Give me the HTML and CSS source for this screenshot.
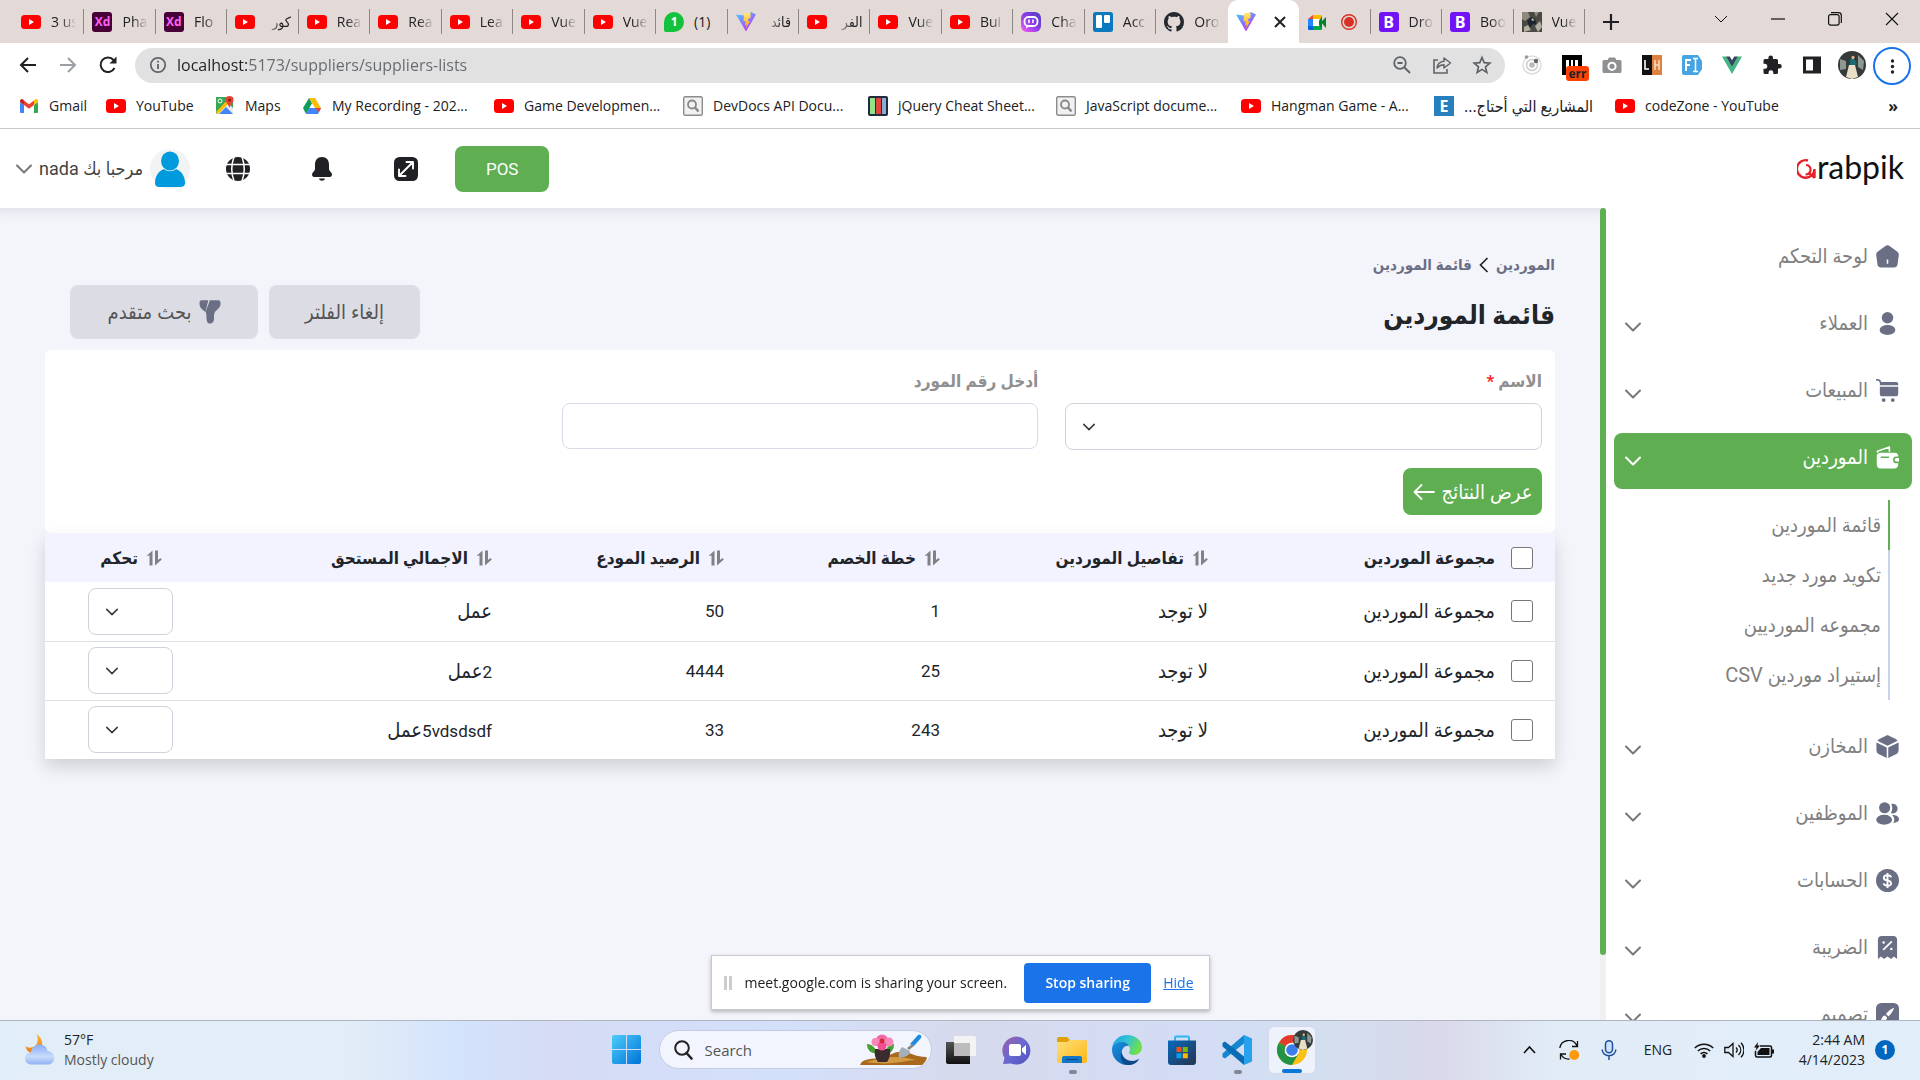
FILE: index.html
```html
<!DOCTYPE html>
<html lang="ar">
<head>
<meta charset="utf-8">
<meta name="viewport" content="width=device-width, initial-scale=1">
<title>قائمة الموردين</title>
<link rel="stylesheet" href="styles.css">
</head>
<body>

<svg class="sprite" aria-hidden="true">
  <defs>
    <linearGradient id="g-vite" x1="0" y1="0" x2=".6" y2="1"><stop offset="0" stop-color="#41d1ff"/><stop offset="1" stop-color="#bd34fe"/></linearGradient>
    <linearGradient id="g-bolt" x1="0" y1="0" x2="0" y2="1"><stop offset="0" stop-color="#ffea83"/><stop offset="1" stop-color="#ffa800"/></linearGradient>
    <linearGradient id="g-chat" x1="0" y1="1" x2="1" y2="0"><stop offset="0" stop-color="#ff5cf0"/><stop offset=".5" stop-color="#8a3de8"/><stop offset="1" stop-color="#4a3fc0"/></linearGradient>
    <linearGradient id="g-win" x1="0" y1="0" x2="1" y2="1"><stop offset="0" stop-color="#4ccdfb"/><stop offset="1" stop-color="#0073d8"/></linearGradient>
    <linearGradient id="g-cloud" x1="0" y1="0" x2="0" y2="1"><stop offset="0" stop-color="#86adf5"/><stop offset=".6" stop-color="#c9dcfb"/><stop offset="1" stop-color="#8fb2f3"/></linearGradient>
    <linearGradient id="g-moon" x1="0" y1="0" x2="0" y2="1"><stop offset="0" stop-color="#f9b233"/><stop offset="1" stop-color="#ef7d22"/></linearGradient>
    <linearGradient id="g-teams" x1="0" y1="0" x2="1" y2="1"><stop offset="0" stop-color="#9b62a8"/><stop offset=".5" stop-color="#6a68d0"/><stop offset="1" stop-color="#4f52c0"/></linearGradient>
    <linearGradient id="g-folder" x1="0" y1="0" x2="1" y2="1"><stop offset="0" stop-color="#ffe07a"/><stop offset="1" stop-color="#fcb714"/></linearGradient>
    <linearGradient id="g-edge" x1="0" y1="0" x2="1" y2=".4"><stop offset="0" stop-color="#1b9de2"/><stop offset=".5" stop-color="#2fc2d8"/><stop offset="1" stop-color="#6fe04a"/></linearGradient>
    <linearGradient id="g-edge2" x1="0" y1="0" x2="1" y2="1"><stop offset="0" stop-color="#1a8ee0"/><stop offset="1" stop-color="#0c59a4"/></linearGradient>
    <linearGradient id="g-store" x1="0" y1="0" x2="1" y2="1"><stop offset="0" stop-color="#0669bd"/><stop offset="1" stop-color="#27344f"/></linearGradient>
    <linearGradient id="g-dark" x1="0" y1="0" x2="0" y2="1"><stop offset="0" stop-color="#555"/><stop offset="1" stop-color="#111"/></linearGradient>
  </defs>
  <symbol id="youtube" viewBox="0 0 20 20"><rect y="3" width="20" height="14" rx="3.500" fill="#f00"/><path d="M8 7l5 3-5 3z" fill="#fff"/></symbol>
  <symbol id="vite" viewBox="0 0 20 20"><path d="M0 2.500l8 .9L15 0l5 2.500L10 19.500z" fill="url(#g-vite)"/><path d="M14.500.3L8 1.600 7.500 9.500l2.300-.4-.8 4 1.600-.3-.6 3.700L14 9l-2.200.3.8-2.800 2-.4z" fill="url(#g-bolt)"/></symbol>
  <symbol id="poe" viewBox="0 0 20 20"><rect width="20" height="20" rx="6" fill="url(#g-chat)"/><rect x="3.500" y="5" width="13" height="9" rx="4" fill="none" stroke="#fff" stroke-width="1.800"/><path d="M8 8v2.500M12 8v2.500" stroke="#fff" stroke-width="1.600" stroke-linecap="round"/><path d="M5 13v3.500L9 14z" fill="#fff"/></symbol>
  <symbol id="trello" viewBox="0 0 20 20"><rect width="20" height="20" rx="2.500" fill="#0a79bf"/><rect x="3" y="3" width="6" height="13" rx="1.200" fill="#fff"/><rect x="11" y="3" width="6" height="8" rx="1.200" fill="#fff"/></symbol>
  <symbol id="github" viewBox="0 0 16 16"><path fill="#24292f" d="M8 0C3.580 0 0 3.580 0 8c0 3.540 2.290 6.530 5.470 7.590.4.070.55-.17.55-.38 0-.19-.01-.82-.01-1.490-2.010.37-2.530-.49-2.690-.94-.09-.23-.48-.94-.82-1.130-.28-.15-.68-.52-.01-.53.63-.01 1.080.58 1.230.82.72 1.210 1.870.87 2.330.66.07-.52.28-.87.51-1.070-1.780-.2-3.640-.89-3.640-3.950 0-.87.31-1.590.82-2.150-.08-.2-.36-1.020.08-2.120 0 0 .67-.21 2.200.82.64-.18 1.320-.27 2-.27s1.360.09 2 .27c1.530-1.040 2.200-.82 2.200-.82.44 1.100.16 1.920.08 2.120.51.56.82 1.270.82 2.150 0 3.070-1.870 3.750-3.650 3.950.29.25.54.73.54 1.480 0 1.070-.01 1.930-.01 2.200 0 .21.15.46.55.38A8.010 8.010 0 0 0 16 8c0-4.420-3.580-8-8-8z"/></symbol>
  <symbol id="meet" viewBox="0 0 20 20"><path d="M6 3v4H1z" fill="#ea4335"/><path d="M6 3h8a1 1 0 0 1 1 1v3H6z" fill="#fbbc04"/><path d="M1 7h5v7H1z" fill="#2684fc"/><path d="M1 14h5v4H2a1 1 0 0 1-1-1z" fill="#0066da"/><path d="M6 14h9v3a1 1 0 0 1-1 1H6z" fill="#00ac47"/><path d="M15 4v13l-3-4V9zM14 10l5-5v11z" fill="#00832d"/><path d="M6 7h6v7H6z" fill="#fff"/></symbol>
  <symbol id="photo" viewBox="0 0 20 20"><path d="M0 0h20v20H0z" fill="#4a4a44"/><path d="M0 0h6l2 5-5 4-3-2zM12 0h5l-3 5z" fill="#8d8a7c"/><path d="M5 9l4-4 4 2 2 6-4-1-3 4z" fill="#1d2430"/><path d="M2 15l4-2 3 5-7 2zM13 14l5-5 2 6-4 5z" fill="#b3aea0"/><path d="M9 8l2-2 1 3z" fill="#d9d2c2"/></symbol>
  <symbol id="gmail" viewBox="0 0 20 20"><path d="M1 6v10a1 1 0 0 0 1 1h3V9z" fill="#4285f4"/><path d="M19 6v10a1 1 0 0 1-1 1h-3V9z" fill="#34a853"/><path d="M15 4.500V9l4-3V5a2 2 0 0 0-3.200-1.600z" fill="#fbbc04"/><path d="M5 9V4.500l5 3.800 5-3.800V9l-5 3.800z" fill="#ea4335"/><path d="M1 5v1l4 3V4.500l-.8-1A2 2 0 0 0 1 5z" fill="#c5221f"/></symbol>
  <symbol id="maps" viewBox="0 0 20 20"><path d="M1 1h17v17H1z" fill="#34a853"/><path d="M1 18L12 6l6 6v6z" fill="#e8eaed"/><path d="M4 18l7-7 7 7z" fill="#4285f4"/><path d="M1 16L13 3l2 3L3 18z" fill="#fbbc04"/><circle cx="5" cy="5" r="2" fill="none" stroke="#fff"/><path d="M14.500 0a4 4 0 0 1 4 4c0 3-3 4-4 8-1-4-4-5-4-8a4 4 0 0 1 4-4z" fill="#ea4335"/><circle cx="14.500" cy="4" r="1.500" fill="#8c1b13"/></symbol>
  <symbol id="drive" viewBox="0 0 20 20"><path d="M7 2h6l6 10h-6z" fill="#fbbc04"/><path d="M7 2l3 5.500L4 18l-3-6z" fill="#0f9d58"/><path d="M7 12h12l-3 6H4z" fill="#4285f4"/><path d="M10 8l2.500 4h-5z" fill="#fff"/><path d="M13 12h6l-2 4z" fill="#ea4335"/></symbol>
  <symbol id="docsearch" viewBox="0 0 20 20"><rect x=".7" y=".7" width="18.600" height="18.600" rx="1.500" fill="#f1f1f1" stroke="#8c8c8c" stroke-width="1.400"/><circle cx="9" cy="8.500" r="4" fill="none" stroke="#888" stroke-width="1.800"/><path d="M12 11.500l3.500 4" stroke="#888" stroke-width="2.500"/></symbol>
  <symbol id="jquery" viewBox="0 0 20 20"><rect width="20" height="20" rx="2" fill="#222b3d"/><path d="M2 2h5v16H2z" fill="#8fe388"/><path d="M8 2h5v16H8z" fill="#e0463e"/><path d="M14 2h4v16h-4z" fill="#86aed6"/></symbol>

  <symbol id="arrow-left" viewBox="0 0 20 20"><path d="M18 10H3M10 3l-7 7 7 7" fill="none" stroke="currentColor" stroke-width="2"/></symbol>
  <symbol id="arrow-right" viewBox="0 0 20 20"><path d="M2 10h15M10 3l7 7-7 7" fill="none" stroke="currentColor" stroke-width="2"/></symbol>
  <symbol id="reload" viewBox="0 0 20 20"><path d="M16.500 13A7.300 7.300 0 1 1 15.500 5l2 2" fill="none" stroke="currentColor" stroke-width="2"/><path d="M18.500 1.500v7h-7z" fill="currentColor"/></symbol>
  <symbol id="info" viewBox="0 0 18 18"><circle cx="9" cy="9" r="7.200" fill="none" stroke="currentColor" stroke-width="1.700"/><path d="M9 8v5M9 4.800v1.800" stroke="currentColor" stroke-width="1.800"/></symbol>
  <symbol id="zoomout" viewBox="0 0 20 20"><circle cx="8" cy="8" r="5.800" fill="none" stroke="currentColor" stroke-width="1.800"/><path d="M12.500 12.500l5.500 5.500M5.500 8h5" stroke="currentColor" stroke-width="1.900"/></symbol>
  <symbol id="share" viewBox="0 0 20 20"><path d="M6 5H2v13h13v-4" fill="none" stroke="currentColor" stroke-width="1.600"/><path d="M5 13c.5-4.500 3-6.500 7-6.800V3l6.500 5-6.500 5V9.800C9 9.800 7 11 5 13z" fill="none" stroke="currentColor" stroke-width="1.500" stroke-linejoin="round"/></symbol>
  <symbol id="star" viewBox="0 0 20 20"><path d="M10 2.500l2.200 5.200 5.600.5-4.300 3.700 1.300 5.500-4.800-3-4.800 3 1.300-5.500L2.200 8.200l5.600-.5z" fill="none" stroke="currentColor" stroke-width="1.700"/></symbol>
  <symbol id="orbit" viewBox="0 0 20 20"><circle cx="10" cy="10" r="9" fill="none" stroke="#ddd" stroke-width="1.500"/><circle cx="10" cy="10" r="5.500" fill="none" stroke="#ccc" stroke-width="1.500"/><circle cx="10" cy="10" r="2.800" fill="#bbb"/><circle cx="14" cy="6" r="2.200" fill="#666"/><circle cx="4.500" cy="2" r="1.800" fill="#999"/></symbol>
  <symbol id="mtile" viewBox="0 0 20 20"><path d="M0 0h20v20H0z"/><path d="M4 5h3v9H4zM9 5h2v9H9zM13 5h3v9h-3z" fill="#fff"/></symbol>
  <symbol id="camera" viewBox="0 0 20 20"><path d="M2 5h3.500l1.500-2.500h6L14.500 5H18a1.500 1.500 0 0 1 1.500 1.500v10A1.500 1.500 0 0 1 18 18H2a1.500 1.500 0 0 1-1.500-1.500v-10A1.500 1.500 0 0 1 2 5z" fill="#8e9092"/><circle cx="10" cy="11.300" r="3.600" fill="none" stroke="#fff" stroke-width="2"/></symbol>
  <symbol id="lh" viewBox="0 0 20 20"><path d="M0 0h10v20H0z" fill="#111"/><path d="M10 0h10v20H10z" fill="#e0803e"/><path d="M3 5v9h4" stroke="#fff" fill="none" stroke-width="1.600"/><path d="M13 5v10M17 5v10M13 10h4" stroke="#f7dcc5" stroke-width="1.500"/></symbol>
  <symbol id="font-ext" viewBox="0 0 20 20"><path d="M2 0h14l4 6v8l-4 6H2a2 2 0 0 1-2-2V2a2 2 0 0 1 2-2z" fill="#47a4e2"/><path d="M4 16V5h5M4 10h4" fill="none" stroke="#fff" stroke-width="2"/><path d="M11 3.500h5M11 16.500h5M13.500 4v12" stroke="#fff" stroke-width="1.500"/></symbol>
  <symbol id="vue" viewBox="0 0 20 20"><path d="M0 1.500h4l6 10.500 6-10.500h4L10 19z" fill="#41b883"/><path d="M4 1.500h3.800L10 5.300l2.200-3.800H16L10 12z" fill="#35495e"/></symbol>
  <symbol id="puzzle" viewBox="0 0 20 20"><path d="M17.500 9H16V5.500A1.500 1.500 0 0 0 14.500 4H11V2.800a2.300 2.300 0 0 0-4.600 0V4H3a1.500 1.500 0 0 0-1.500 1.500v3.300h1.300a2.500 2.500 0 0 1 0 5H1.500v3.700A1.500 1.500 0 0 0 3 19h3.500v-1.300a2.400 2.400 0 0 1 4.800 0V19h3.200a1.500 1.500 0 0 0 1.500-1.500V13.500h1.500a2.250 2.250 0 0 0 0-4.500z" fill="#202124"/></symbol>
  <symbol id="sidepanel" viewBox="0 0 20 20"><path d="M1 1.500h18v17H1zM4 4.500v11h7v-11z" fill="#202124" fill-rule="evenodd"/></symbol>
  <symbol id="portrait" viewBox="0 0 28 28"><circle cx="14" cy="14" r="14" fill="#343b3a"/><path d="M2 8l6 2v8l-6 1zM20 4l6 6-1 9-5-3z" fill="#8d9891"/><path d="M13 5h4l1 6-2 4h-4z" fill="#111"/><path d="M12 8l5 0 2 5-3 2-4-1z" fill="#1b6a78"/><path d="M11 14h6l3 12-6 2-6-2z" fill="#e9dfc6"/><circle cx="15" cy="6.500" r="1.800" fill="#d9b08c"/></symbol>
  <symbol id="dots" viewBox="0 0 20 20"><circle cx="10" cy="3.500" r="2" fill="#202124"/><circle cx="10" cy="10" r="2" fill="#202124"/><circle cx="10" cy="16.500" r="2" fill="#202124"/></symbol>

  <symbol id="chev" viewBox="0 0 16 10"><path d="M1 1.500l7 7 7-7" fill="none" stroke="currentColor" stroke-width="2" stroke-linecap="round" stroke-linejoin="round"/></symbol>
  <symbol id="globe" viewBox="0 0 24 24"><circle cx="12" cy="12" r="12" fill="#202124"/><path d="M0 7.500h24M0 16.500h24M8 0c-3 8-3 16 0 24M16 0c3 8 3 16 0 24" fill="none" stroke="#fff" stroke-width="1.500"/></symbol>
  <symbol id="bell" viewBox="0 0 20 24"><path d="M10 0c4.500 0 7 3 7 7.500V12c0 2 3 3.500 3 5.500 0 2-1.500 2.500-3 2.500H3c-1.500 0-3-.5-3-2.500S3 14 3 12V7.500C3 3 5.500 0 10 0zM7 21.500h6c-.5 3-5.500 3-6 0z" fill="#202124"/></symbol>
  <symbol id="expand" viewBox="0 0 24 24"><rect width="24" height="24" rx="5.500" fill="#202124"/><path d="M5 19L19 5M12.500 5H19v6.500M5 12.500V19h6.500" fill="none" stroke="#fff" stroke-width="1.900" stroke-linecap="round" stroke-linejoin="round"/></symbol>
  <symbol id="user-blue" viewBox="0 0 40 40"><circle cx="20" cy="20" r="20" fill="#f2f3f3"/><ellipse cx="20" cy="12" rx="9" ry="9.500" fill="#009bdc"/><path d="M14 20c3 3 9 3 12 0 6 2 9 8 9 14 0 3-2 4-5 4H10c-3 0-5-1-5-4 0-6 3-12 9-14z" fill="#009bdc"/></symbol>

  <symbol id="home" viewBox="0 0 24 24"><path fill-rule="evenodd" d="M9.500 1.300a4 4 0 0 1 5 0l7.500 5.500c1.500 1.200 2 2.600 1.700 4.300l-1.200 9c-.3 2.200-1.700 3.400-3.800 3.400H5.300c-2.100 0-3.500-1.200-3.800-3.400l-1.200-9C0 9.400.5 8 2 6.800zM11.200 15v4.500h1.600V15z" fill="currentColor"/></symbol>
  <symbol id="person" viewBox="0 0 24 24"><circle cx="12" cy="6" r="6" fill="currentColor"/><ellipse cx="12" cy="18.800" rx="8.200" ry="5.200" fill="currentColor"/></symbol>
  <symbol id="cart" viewBox="0 0 24 24"><path d="M0 .9c3-.3 4.300 0 4.600 2.400" fill="none" stroke="currentColor" stroke-width="1.600" stroke-linecap="round"/><path d="M4 3h17a2.200 2.200 0 0 1 2.200 2.300V6.500H4zM4 8h19.200v7a3 3 0 0 1-3 3H6.500C4.500 18 4 16.500 4 15z" fill="currentColor"/><circle cx="8" cy="22" r="2" fill="currentColor"/><circle cx="17.500" cy="22" r="2" fill="currentColor"/></symbol>
  <symbol id="wallet" viewBox="0 0 24 24"><path d="M1.500 7V5.500L14 1v5" fill="none" stroke="currentColor" stroke-width="1.600" stroke-linejoin="round"/><path fill-rule="evenodd" d="M4.500 7H20a3.500 3.500 0 0 1 3.300 4h-2a3.300 3.300 0 0 0 0 7h2c0 3.500-1.500 5.500-4.300 5.500H5C2.500 23.500.8 22 .8 19.500v-9C.8 8.500 2.300 7 4.500 7zM5 11v1.600h8.500V11z" fill="currentColor"/><path d="M21.300 12.600H24v3.600h-2.700a1.800 1.800 0 0 1 0-3.600z" fill="currentColor"/></symbol>
  <symbol id="box" viewBox="0 0 24 24"><path d="M12 0l8.500 4.200a5 5 0 0 1 2 1.800L12 11.300 1.500 6a5 5 0 0 1 2-1.800zM.5 7.800l10.700 5.300V24l-8-4A4.500 4.500 0 0 1 .4 16V8.500zM23.500 7.800l-10.700 5.300V24l8-4a4.500 4.500 0 0 0 2.800-4V8.500z" fill="currentColor"/></symbol>
  <symbol id="people" viewBox="0 0 24 24"><circle cx="9" cy="6" r="5.800" fill="currentColor"/><ellipse cx="8.500" cy="18.500" rx="8.300" ry="5.300" fill="currentColor"/><path d="M16 2.200a5 5 0 1 1-.5 9.300c1.800-3 1.900-6.300.5-9.300zM17 13.600c4 0 7 1.600 7 4.200s-2.300 4-6 4c1.700-2.500 1.400-5.500-1-8.200z" fill="currentColor"/></symbol>
  <symbol id="dollar" viewBox="0 0 24 24"><circle cx="12" cy="12" r="12" fill="currentColor"/><path d="M16 8.500c-.8-1.300-2.200-1.900-4-1.900-5 0-4.800 4.500-1 5.200 6 .8 6.400 5.600 1 5.600-2 0-3.500-.7-4.300-2.200M12 4.300v15.400" fill="none" stroke="#fff" stroke-width="2"/></symbol>
  <symbol id="receipt" viewBox="0 0 24 24"><path d="M2 4a4 4 0 0 1 4-4h12a4 4 0 0 1 4 4v20l-3.300-2.500-3 2.500L12 21.500 8.300 24l-3-2.500L2 24z" fill="currentColor"/><path d="M7.500 14.500l9-9" stroke="#fff" stroke-width="1.800"/><circle cx="8" cy="6.800" r="1.300" fill="#fff"/><circle cx="16" cy="13.500" r="1.300" fill="#fff"/></symbol>
  <symbol id="design" viewBox="0 0 24 24"><rect width="24" height="24" rx="5.500" fill="currentColor"/><path d="M19 5c-3 1-7 4-8.500 6.500l2.500 2.500C15.500 12 18 8 19 5zM9.500 13c-3 0-3 3-4.500 5 3 1 6.500 0 6.500-3z" fill="#fff"/></symbol>
  <symbol id="funnel" viewBox="0 0 22 24"><path d="M6.500 12C2.500 9.500.5 7 .5 4V2.500A2.200 2.200 0 0 1 2.700.3h6.600zM10.800.3h8.500a2.200 2.200 0 0 1 2.200 2.200V4c0 3.500-3.500 5.500-5.500 8-1 1.500-1 3-1 5 0 3.500 0 4.500-2 6-1.500 1-4 1-5-1.500C7 18.500 8 15 6.800 12.500 6.500 11.500 9 6 10.800.3z" fill="#6b6f85"/></symbol>
  <symbol id="sort" viewBox="0 0 16 16"><path d="M.5 6l6-5.500v15h-3v-10zM9 .5h3v9.500l2.500-2 1.300 1.500L9 15.500z" fill="#808085"/></symbol>
  <symbol id="go" viewBox="0 0 22 16"><path d="M21 8H1.500M8.500 1l-7 7 7 7" fill="none" stroke="currentColor" stroke-width="1.800" stroke-linecap="round" stroke-linejoin="round"/></symbol>
  <symbol id="crumb" viewBox="0 0 10 16"><path d="M8.500 1L1.500 8l7 7" fill="none" stroke="#212529" stroke-width="1.700"/></symbol>

  <symbol id="weather" viewBox="0 0 32 32"><path d="M12.500 0c2 4 1.500 9-1 11.500S4 14.500 1.500 12c.5 3 2 6 6.500 7h8c4-6 3-15-3.500-19z" fill="url(#g-moon)"/><path d="M8 30.500c-9 0-9-11.500-1-12C8 8.500 22 7.500 23.500 17c9 .5 9 13.500 0 13.500z" fill="url(#g-cloud)"/></symbol>
  <symbol id="windows" viewBox="0 0 30 30"><path d="M0 2a2 2 0 0 1 2-2h12.500v14.500H0zM15.500 0H28a2 2 0 0 1 2 2v12.500H15.500zM0 15.500h14.500V30H2a2 2 0 0 1-2-2zM15.500 15.500H30V28a2 2 0 0 1-2 2H15.500z" fill="url(#g-win)"/></symbol>
  <symbol id="search" viewBox="0 0 20 20"><circle cx="9" cy="8" r="6.800" fill="none" stroke="#222" stroke-width="2"/><path d="M13.500 13l5 5.500" stroke="#222" stroke-width="2.600" stroke-linecap="round"/></symbol>
  <symbol id="garden" viewBox="0 0 68 32"><path d="M0 31c2-7 14-6 20-7 10-1 14-8 24-6 8 1 12 5 22 5 2 0 0 5-4 8z" fill="#a8691e"/><path d="M6 28c14-4 30-8 50-2-10 0-22 6-50 2z" fill="#d29a43"/><path d="M7 10c5 0 9 4 10 9-6 1-10-3-10-9zM34 10c-5 0-8 4-9 9 6 1 9-3 9-9z" fill="#45a02f"/><path d="M15 15h15c1 5-1 10-3 13h-9c-3-4-4-8-3-13z" fill="#3a2c2e"/><circle cx="22" cy="7" r="6.500" fill="#f469a5"/><circle cx="15.500" cy="8" r="4" fill="#f887b8"/><circle cx="29" cy="8" r="4.500" fill="#f887b8"/><circle cx="22" cy="12" r="4.500" fill="#f05090"/><circle cx="22" cy="7" r="2.400" fill="#d32b3e"/><path d="M58 1c3-1 4 1 3 3l-7 8-4-2z" fill="#1e8be0"/><path d="M52 10l2 2-5 4-2-2z" fill="#888"/><path d="M42 13l8 4c0 4-4 6-11 7-1-4 0-8 3-11z" fill="#a5afb9"/></symbol>
  <symbol id="taskview" viewBox="0 0 30 30"><path d="M0 7h24v22H2a2 2 0 0 1-2-2z" fill="url(#g-dark)"/><path d="M8 1h20a2 2 0 0 1 2 2v18H8z" fill="#f3f3f3"/><path d="M8 8h16v13H8z" fill="#bcbcbc"/></symbol>
  <symbol id="teams" viewBox="0 0 30 30"><path d="M1 29l1.500-6A14 14 0 1 1 9 28.500z" fill="url(#g-teams)"/><rect x="7" y="9" width="12" height="12" rx="2" fill="#fff"/><path d="M20 13.500l4-3.500v10l-4-3.500z" fill="#fff"/></symbol>
  <symbol id="folder" viewBox="0 0 30 30"><path d="M0 4a2 2 0 0 1 2-2h8l3 3h15a2 2 0 0 1 2 2v4H0z" fill="#e0a008"/><path d="M0 7h10l3-2h15a2 2 0 0 1 2 2v19a2 2 0 0 1-2 2H2a2 2 0 0 1-2-2z" fill="url(#g-folder)"/><path d="M5 28v-5a2 2 0 0 1 2-2h16a2 2 0 0 1 2 2v5z" fill="#1378c8"/><path d="M9 24.500h12" stroke="#0a4c8c" stroke-width="1.300"/></symbol>
  <symbol id="edge" viewBox="0 0 30 30"><path d="M15 0c9 0 15 6 15 12 0 5-4 8-8 8-3 0-5-1-5-2.500 0-1 1-1.500 1-3.500 0-3-3-6-8-6S1 11 0 15C0 6 7 0 15 0z" fill="url(#g-edge)"/><path d="M0 15c0-5 5-8 10-8 4 0 6 2 7 4-5-1-8 4-7 8 1 5 5 8 9 8 3 0 6-1 8-3-2 4-7 6-12 6C7 30 0 23 0 15z" fill="url(#g-edge2)"/><path d="M9.500 17c1 6 6 9 11 9 2.500 0 5-1 6.500-2.500C24 31 13 32 10 26c-1.500-3-1.500-6-.5-9z" fill="#0c4a8a"/></symbol>
  <symbol id="store" viewBox="0 0 30 30"><path d="M8 6V3a1.500 1.500 0 0 1 1.500-1.500h11A1.500 1.500 0 0 1 22 3v3" fill="none" stroke="#2fb6ef" stroke-width="2"/><path d="M1 5.500h28V27a3 3 0 0 1-3 3H4a3 3 0 0 1-3-3z" fill="url(#g-store)"/><path d="M9.500 12h5v5h-5z" fill="#f25022"/><path d="M15.800 12h5v5h-5z" fill="#7fba00"/><path d="M9.500 18.300h5v5h-5z" fill="#00a4ef"/><path d="M15.800 18.300h5v5h-5z" fill="#ffb900"/></symbol>
  <symbol id="vscode" viewBox="0 0 30 30"><path d="M22 0v8.500L3 23.500.5 22v-3.500z" fill="#1387cf"/><path d="M22 30v-8.500L3 6.500.5 8v3.500z" fill="#0a6cb4"/><path d="M22 0l8 3.500v23L22 30z" fill="#27a0ee"/></symbol>
  <symbol id="chrome" viewBox="0 0 30 30"><circle cx="15" cy="15" r="15" fill="#fbc116"/><path d="M15 15L2 7.500A15 15 0 0 1 28 7.500H15z" fill="#e33b2e"/><path d="M2 7.500A15 15 0 0 0 15 30l6.500-11.300L15 15 8.500 18.700z" fill="#229342"/><path d="M2 7.500L8.500 18.700 15 15z" fill="#229342"/><circle cx="15" cy="15" r="7.300" fill="#fff"/><circle cx="15" cy="15" r="5.800" fill="#3b7ded"/></symbol>
  <symbol id="sync" viewBox="0 0 20 20"><path d="M.8 8A9 9 0 0 1 18 6M18.500 1v5.500H13M1.500 19.500V14h5.500M2 14.500c2 3.500 5 4.800 8.500 4.500" fill="none" stroke="#111" stroke-width="1.300"/><circle cx="15.200" cy="15" r="5" fill="#ff9a0c"/></symbol>
  <symbol id="mic" viewBox="0 0 16 20"><rect x="4.500" y=".8" width="7" height="12" rx="3.500" fill="#cfe3fb" stroke="#1c4fa0" stroke-width="1.500"/><path d="M1.200 9.500c0 8.300 13.600 8.300 13.600 0M8 16v4" fill="none" stroke="#1c4fa0" stroke-width="1.500"/></symbol>
  <symbol id="wifi" viewBox="0 0 20 16"><path d="M.8 6a13 13 0 0 1 18.400 0M3.800 9a8.800 8.800 0 0 1 12.400 0M6.600 11.900a4.800 4.800 0 0 1 6.800 0" fill="none" stroke="#111" stroke-width="1.500"/><circle cx="10" cy="14" r="1.900" fill="#111"/></symbol>
  <symbol id="volume" viewBox="0 0 20 16"><path d="M.8 5.500h3.700L9 1.500v13l-4.500-4H.8zM12 5.500c1.500 1.500 1.500 3.500 0 5M14.500 3c3 3 3 7 0 10M17 .8c4 4.200 4 10.200 0 14.400" fill="none" stroke="#111" stroke-width="1.300"/></symbol>
  <symbol id="battery" viewBox="0 0 20 16"><path d="M6 4h10a1.500 1.500 0 0 1 1.500 1.500v8A1.500 1.500 0 0 1 16 15H3a1.500 1.500 0 0 1-1.500-1.500V9" fill="none" stroke="#111" stroke-width="1.500"/><path d="M7 6h8.500v7H3.500v-3zM18 7.500h2v4h-2zM4 0L0 5.500h2.500L1.500 9 6 3.500H3.500z" fill="#111"/></symbol>
</svg>

<div class="browser">
  <div class="tabstrip">
    <div class="tabs">
      <button class="tab"><svg><use href="#youtube"/></svg><span>3 us</span></button>
      <button class="tab"><i class="letter xd">Xd</i><span>Pha</span></button>
      <button class="tab"><i class="letter xd">Xd</i><span>Flo</span></button>
      <button class="tab"><svg><use href="#youtube"/></svg><span dir="rtl">كور</span></button>
      <button class="tab"><svg><use href="#youtube"/></svg><span>Rea</span></button>
      <button class="tab"><svg><use href="#youtube"/></svg><span>Rea</span></button>
      <button class="tab"><svg><use href="#youtube"/></svg><span>Lea</span></button>
      <button class="tab"><svg><use href="#youtube"/></svg><span>Vue</span></button>
      <button class="tab"><svg><use href="#youtube"/></svg><span>Vue</span></button>
      <button class="tab"><i class="letter wa">1</i><span class="whole">(1)</span></button>
      <button class="tab"><svg><use href="#vite"/></svg><span dir="rtl">قائد</span></button>
      <button class="tab"><svg><use href="#youtube"/></svg><span dir="rtl">الفر</span></button>
      <button class="tab"><svg><use href="#youtube"/></svg><span>Vue</span></button>
      <button class="tab"><svg><use href="#youtube"/></svg><span>Bui</span></button>
      <button class="tab"><svg><use href="#poe"/></svg><span>Cha</span></button>
      <button class="tab"><svg><use href="#trello"/></svg><span>Acc</span></button>
      <button class="tab last"><svg><use href="#github"/></svg><span>Oro</span></button>
      <button class="tab active"><svg><use href="#vite"/></svg><svg class="x" viewBox="0 0 12 12"><path d="M1 1l10 10M11 1L1 11" stroke="#202124" stroke-width="2"/></svg></button>
      <button class="tab"><svg><use href="#meet"/></svg><svg class="rec" viewBox="0 0 16 16"><circle cx="8" cy="8" r="7.300" fill="none" stroke="#d93025" stroke-width="1.400"/><circle cx="8" cy="8" r="5" fill="#d93025"/></svg></button>
      <button class="tab"><i class="letter bs">B</i><span>Dro</span></button>
      <button class="tab"><i class="letter bs">B</i><span>Boo</span></button>
      <button class="tab"><svg><use href="#photo"/></svg><span>Vue</span></button>
    </div>
    <div class="window-tools">
      <button class="newtab" aria-label="New tab"><svg viewBox="0 0 16 16"><path d="M8 0v16M0 8h16" stroke="#202124" stroke-width="2.200"/></svg></button>
      <button aria-label="Search tabs"><svg viewBox="0 0 14 14"><path d="M1 4l6 6 6-6" fill="none" stroke="#111"/></svg></button>
      <button aria-label="Minimize"><svg viewBox="0 0 14 14"><path d="M0 7h14" stroke="#111" stroke-width="1.200"/></svg></button>
      <button aria-label="Restore"><svg viewBox="0 0 14 14"><rect x=".6" y="2.600" width="10.500" height="10.500" rx="2" fill="none" stroke="#111" stroke-width="1.200"/><path d="M3 .7h7.500A2.800 2.800 0 0 1 13.300 3.500V11" fill="none" stroke="#111" stroke-width="1.200"/></svg></button>
      <button aria-label="Close"><svg viewBox="0 0 14 14"><path d="M1 1l12 12M13 1L1 13" stroke="#111" stroke-width="1.100"/></svg></button>
    </div>
  </div>

  <div class="toolbar">
    <button class="tool" aria-label="Back"><svg><use href="#arrow-left"/></svg></button>
    <button class="tool dim" aria-label="Forward"><svg><use href="#arrow-right"/></svg></button>
    <button class="tool" aria-label="Reload"><svg><use href="#reload"/></svg></button>
    <div class="omnibox">
      <svg class="info"><use href="#info"/></svg>
      <input type="text" aria-label="Address" value="localhost:5173/suppliers/suppliers-lists">
      <button class="tool" aria-label="Zoom"><svg><use href="#zoomout"/></svg></button>
      <button class="tool" aria-label="Share"><svg><use href="#share"/></svg></button>
      <button class="tool" aria-label="Bookmark"><svg><use href="#star"/></svg></button>
    </div>
    <button class="tool" aria-label="Orbit"><svg><use href="#orbit"/></svg></button>
    <button class="tool badge-host" aria-label="Extension error"><svg><use href="#mtile"/></svg><b class="err">err</b></button>
    <button class="tool" aria-label="Screenshot"><svg><use href="#camera"/></svg></button>
    <button class="tool" aria-label="Lighthouse"><svg><use href="#lh"/></svg></button>
    <button class="tool" aria-label="Fonts"><svg><use href="#font-ext"/></svg></button>
    <button class="tool" aria-label="Vue devtools"><svg><use href="#vue"/></svg></button>
    <button class="tool" aria-label="Extensions"><svg><use href="#puzzle"/></svg></button>
    <button class="tool" aria-label="Side panel"><svg><use href="#sidepanel"/></svg></button>
    <button class="tool" aria-label="Profile"><svg class="face"><use href="#portrait"/></svg></button>
    <button class="tool" aria-label="Menu"><span class="ring"><svg><use href="#dots"/></svg></span></button>
  </div>

  <nav class="bookmarks">
    <a href="#"><svg><use href="#gmail"/></svg>Gmail</a>
    <a href="#"><svg><use href="#youtube"/></svg>YouTube</a>
    <a href="#"><svg><use href="#maps"/></svg>Maps</a>
    <a href="#"><svg><use href="#drive"/></svg>My Recording - 202...</a>
    <a href="#"><svg><use href="#youtube"/></svg>Game Developmen...</a>
    <a href="#"><svg><use href="#docsearch"/></svg>DevDocs API Docu...</a>
    <a href="#"><svg><use href="#jquery"/></svg>jQuery Cheat Sheet...</a>
    <a href="#"><svg><use href="#docsearch"/></svg>JavaScript docume...</a>
    <a href="#"><svg><use href="#youtube"/></svg>Hangman Game - A...</a>
    <a href="#"><i class="letter e">E</i><span dir="rtl">المشاريع التي أحتاج...</span></a>
    <a href="#"><svg><use href="#youtube"/></svg>codeZone - YouTube</a>
    <button class="more">»</button>
  </nav>
</div>

<div class="app" dir="rtl">
  <header class="topbar">
    <a class="logo" href="#" dir="ltr" aria-label="arabpik"><svg viewBox="0 0 20 26"><path d="M11 3.500A8.800 8.800 0 1 0 17.500 12v9" fill="none" stroke="#e8202a" stroke-width="2.400"/><path d="M9 8c3 0 5 2.500 4.500 5.500s-2.500 4-5 4" fill="none" stroke="#e8202a" stroke-width="2.200"/><path d="M12 16l5.500 5" stroke="#e8202a" stroke-width="2.200"/></svg><span>rabpik</span></a>
    <div class="actions">
      <button class="pos">POS</button>
      <button class="round" aria-label="ملء الشاشة"><svg><use href="#expand"/></svg></button>
      <button class="round" aria-label="الإشعارات"><svg><use href="#bell"/></svg></button>
      <button class="round" aria-label="اللغة"><svg><use href="#globe"/></svg></button>
      <button class="profile"><svg class="avatar"><use href="#user-blue"/></svg><span>مرحبا بك nada</span><svg class="chev"><use href="#chev"/></svg></button>
    </div>
  </header>

  <div class="body">
    <aside class="sidebar">
      <nav class="menu">
        <a class="item" href="#"><svg class="ico"><use href="#home"/></svg><span>لوحة التحكم</span></a>
        <a class="item" href="#"><svg class="ico"><use href="#person"/></svg><span>العملاء</span><svg class="chev"><use href="#chev"/></svg></a>
        <a class="item" href="#"><svg class="ico"><use href="#cart"/></svg><span>المبيعات</span><svg class="chev"><use href="#chev"/></svg></a>
        <a class="item current" href="#"><svg class="ico"><use href="#wallet"/></svg><span>الموردين</span><svg class="chev"><use href="#chev"/></svg></a>
        <div class="submenu">
          <a class="on" href="#">قائمة الموردين</a>
          <a href="#">تكويد مورد جديد</a>
          <a href="#">مجموعه المورديين</a>
          <a href="#">إستيراد موردين CSV</a>
        </div>
        <a class="item" href="#"><svg class="ico"><use href="#box"/></svg><span>المخازن</span><svg class="chev"><use href="#chev"/></svg></a>
        <a class="item" href="#"><svg class="ico"><use href="#people"/></svg><span>الموظفين</span><svg class="chev"><use href="#chev"/></svg></a>
        <a class="item" href="#"><svg class="ico"><use href="#dollar"/></svg><span>الحسابات</span><svg class="chev"><use href="#chev"/></svg></a>
        <a class="item" href="#"><svg class="ico"><use href="#receipt"/></svg><span>الضريبة</span><svg class="chev"><use href="#chev"/></svg></a>
        <a class="item" href="#"><svg class="ico"><use href="#design"/></svg><span>تصميم</span><svg class="chev"><use href="#chev"/></svg></a>
      </nav>
      <div class="scroll"><div class="thumb"></div></div>
    </aside>

    <main class="content">
      <nav class="crumbs"><a href="#">الموردين</a><svg><use href="#crumb"/></svg><a href="#">قائمة الموردين</a></nav>
      <div class="heading">
        <h1>قائمة الموردين</h1>
        <div class="filters">
          <button>إلغاء الفلتر</button>
          <button><svg><use href="#funnel"/></svg>بحث متقدم</button>
        </div>
      </div>

      <form class="search">
        <div class="fields">
          <div class="field">
            <label for="name">الاسم <em>*</em></label>
            <div class="pick"><select id="name"><option></option></select><svg><use href="#chev"/></svg></div>
          </div>
          <div class="field">
            <label for="number">أدخل رقم المورد</label>
            <input id="number" type="text">
          </div>
        </div>
        <button class="submit" type="button">عرض النتائج<svg><use href="#go"/></svg></button>
      </form>

      <table class="list">
        <colgroup><col class="c1"><col class="c2"><col class="c3"><col class="c4"><col class="c5"><col class="c6"></colgroup>
        <thead>
          <tr>
            <th><label><input type="checkbox">مجموعة الموردين</label></th>
            <th><span class="sortable"><svg><use href="#sort"/></svg>تفاصيل الموردين</span></th>
            <th><span class="sortable"><svg><use href="#sort"/></svg>خطة الخصم</span></th>
            <th><span class="sortable"><svg><use href="#sort"/></svg>الرصيد المودع</span></th>
            <th><span class="sortable"><svg><use href="#sort"/></svg>الاجمالي المستحق</span></th>
            <th class="control"><span class="sortable"><svg><use href="#sort"/></svg>تحكم</span></th>
          </tr>
        </thead>
        <tbody>
          <tr>
            <td><label><input type="checkbox">مجموعة الموردين</label></td><td>لا توجد</td><td class="num">1</td><td class="num">50</td><td>عمل</td>
            <td><div class="pick small"><select aria-label="تحكم"><option></option></select><svg><use href="#chev"/></svg></div></td>
          </tr>
          <tr>
            <td><label><input type="checkbox">مجموعة الموردين</label></td><td>لا توجد</td><td class="num">25</td><td class="num">4444</td><td><bdi class="num">2</bdi>عمل</td>
            <td><div class="pick small"><select aria-label="تحكم"><option></option></select><svg><use href="#chev"/></svg></div></td>
          </tr>
          <tr>
            <td><label><input type="checkbox">مجموعة الموردين</label></td><td>لا توجد</td><td class="num">243</td><td class="num">33</td><td dir="ltr">عمل<bdi class="num">5vdsdsdf</bdi></td>
            <td><div class="pick small"><select aria-label="تحكم"><option></option></select><svg><use href="#chev"/></svg></div></td>
          </tr>
        </tbody>
      </table>
    </main>
  </div>
</div>

<div class="sharing">
  <span class="grip"></span>
  <span class="msg">meet.google.com is sharing your screen.</span>
  <button>Stop sharing</button>
  <a href="#">Hide</a>
</div>

<footer class="taskbar">
  <div class="weather"><svg><use href="#weather"/></svg><div>57°F<small>Mostly cloudy</small></div></div>
  <div class="dock">
    <button class="start" aria-label="Start"><svg><use href="#windows"/></svg></button>
    <label class="find"><svg class="lens"><use href="#search"/></svg><input type="text" placeholder="Search" aria-label="Search"><svg class="garden"><use href="#garden"/></svg></label>
    <button class="appico views" aria-label="Task view"><svg><use href="#taskview"/></svg></button>
    <button class="appico" aria-label="Chat"><svg><use href="#teams"/></svg></button>
    <button class="appico open" aria-label="Explorer"><svg><use href="#folder"/></svg></button>
    <button class="appico" aria-label="Edge"><svg><use href="#edge"/></svg></button>
    <button class="appico" aria-label="Store"><svg><use href="#store"/></svg></button>
    <button class="appico open" aria-label="Code"><svg><use href="#vscode"/></svg></button>
    <button class="appico focus" aria-label="Chrome"><svg><use href="#chrome"/></svg><svg class="mini"><use href="#portrait"/></svg></button>
  </div>
  <div class="tray">
    <button aria-label="Hidden icons"><svg class="up" viewBox="0 0 13 9"><path d="M1 8l5.500-6L12 8" fill="none" stroke="#111" stroke-width="1.600"/></svg></button>
    <button aria-label="Update"><svg><use href="#sync"/></svg></button>
    <button aria-label="Microphone"><svg><use href="#mic"/></svg></button>
    <button class="lang">ENG</button>
    <button class="status" aria-label="Network, sound and battery"><svg><use href="#wifi"/></svg><svg><use href="#volume"/></svg><svg><use href="#battery"/></svg></button>
    <button class="clock">2:44 AM<br>4/14/2023</button>
    <b class="count">1</b>
  </div>
</footer>
</body>
</html>
```

FILE: styles.css
```css
* { box-sizing: border-box; }

html, body { height: 100%; }

body {
  margin: 0;
  display: flex;
  flex-direction: column;
  overflow: hidden;
  font-family: "Open Sans", "DejaVu Sans Condensed", "DejaVu Sans", sans-serif;
  font-size: 14px;
  color: #202124;
  background: #fff;
}

button, input, select { font: inherit; color: inherit; }
button { background: none; border: 0; padding: 0; }
a { color: inherit; text-decoration: none; }
svg { flex: none; display: block; }
.sprite { position: absolute; width: 0; height: 0; }

.letter {
  flex: none;
  width: 20px;
  height: 20px;
  line-height: 20px;
  border-radius: 3px;
  text-align: center;
  font-style: normal;
  font-weight: 700;
  color: #fff;
}
.xd { background: #470137; color: #ff61f6; font-size: 12px; }
.bs { background: #7112f9; font-size: 16px; }
.wa { background: #12c23c; border-radius: 50% 50% 50% 10%; font-size: 12px; }
.e { background: #2780bd; border-radius: 0; font-size: 16px; }

/* Tab strip */
.browser { flex: none; border-bottom: 1px solid #c9c9c9; }
.tabstrip { display: flex; height: 43px; background: #e3dad7; }
.tabs { flex: 1; display: flex; min-width: 0; padding-left: 13px; }
.tab {
  flex: 1 1 0;
  min-width: 0;
  display: flex;
  align-items: center;
  gap: 10px;
  padding: 0 8px;
  background: linear-gradient(#8d8785, #8d8785) right 9px / 1px 25px no-repeat;
}
.tab svg { width: 20px; height: 20px; }
.tab span {
  flex: 1;
  overflow: hidden;
  white-space: nowrap;
  text-align: start;
  -webkit-mask-image: linear-gradient(90deg, #000 40%, transparent);
  mask-image: linear-gradient(90deg, #000 40%, transparent);
}
.tab span[dir="rtl"] {
  -webkit-mask-image: linear-gradient(270deg, #000 40%, transparent);
  mask-image: linear-gradient(270deg, #000 40%, transparent);
}
.tab .whole { -webkit-mask-image: none; mask-image: none; }
.tab.last { background: none; }
.tab.active { background: #fff; border-radius: 10px 10px 0 0; gap: 18px; }
.tab .x { width: 12px; height: 12px; }
.tab .rec { width: 16px; height: 16px; margin-left: 4px; }
.window-tools { flex: none; display: flex; width: 335px; padding-bottom: 6px; }
.window-tools button { width: 57px; display: grid; place-items: center; }
.window-tools svg { width: 14px; height: 14px; }
.window-tools .newtab { width: 52px; padding-top: 6px; margin-right: auto; }
.window-tools .newtab svg { width: 16px; height: 16px; }

/* Toolbar */
.toolbar { display: flex; align-items: center; height: 44px; padding: 0 8px; }
.tool { flex: none; width: 40px; height: 36px; display: grid; place-items: center; }
.tool svg { width: 20px; height: 20px; }
.tool.dim { color: #9aa0a6; }
.omnibox {
  flex: 1;
  display: flex;
  align-items: center;
  height: 35px;
  margin: 0 7px;
  padding: 0 3px 0 14px;
  border-radius: 18px;
  background: #e1e1e1;
  color: #5f6368;
}
.omnibox .info { width: 18px; height: 18px; }
.omnibox input {
  flex: 1;
  min-width: 0;
  margin-left: 10px;
  padding: 0;
  border: 0;
  outline: 0;
  font-size: 16px;
  background: linear-gradient(90deg, #202124 71px, #666a6e 71px);
  -webkit-background-clip: text;
  background-clip: text;
  -webkit-text-fill-color: transparent;
}
.badge-host { position: relative; }
.err {
  position: absolute;
  left: 14px;
  top: 19px;
  width: 23px;
  height: 15px;
  line-height: 15px;
  border-radius: 3px;
  background: #ff4107;
  font-size: 12px;
  text-align: center;
}
.tool .face { width: 28px; height: 28px; }
.ring {
  display: grid;
  place-items: center;
  width: 38px;
  height: 38px;
  border: 2px solid #1a73e8;
  border-radius: 50%;
}
.ring svg { width: 17px; height: 17px; }

.bookmarks {
  display: grid;
  grid-template-columns: 87px 109px 87px 192px 189px 185px 188px 185px 193px 181px 168px 1fr;
  align-items: center;
  height: 41px;
  padding: 0 22px 4px 19px;
  white-space: nowrap;
}
.bookmarks a { display: flex; align-items: center; gap: 10px; }
.bookmarks svg { width: 20px; height: 20px; }
.bookmarks [dir="rtl"] { font-size: 16px; line-height: 20px; }
.more { justify-self: end; font-weight: 700; font-size: 16px; }

/* Application */
.app {
  flex: 1;
  min-height: 0;
  display: flex;
  flex-direction: column;
  font-family: Roboto, "DejaVu Sans Condensed", "DejaVu Sans", sans-serif;
  font-size: 20px;
  color: #212529;
}
.topbar {
  flex: none;
  display: flex;
  align-items: center;
  justify-content: space-between;
  height: 79px;
  padding: 0 16px;
  background: #fff;
}
.logo { display: flex; align-items: center; padding-bottom: 4px; font: 32px/40px Lato, sans-serif; color: #111; }
.logo svg { width: 20px; height: 26px; margin-top: 6px; }
.actions { display: flex; align-items: center; }
.pos {
  width: 94px;
  height: 46px;
  border-radius: 8px;
  background: #5fae52;
  color: #fff;
  font-size: 17px;
}
.round { width: 24px; margin-right: 60px; display: grid; place-items: center; }
.round svg { width: 24px; height: 24px; }
.pos + .round { margin-right: 37px; }
.profile { display: flex; align-items: center; gap: 7px; margin-right: 36px; color: #444; font-size: 18px; }
.avatar { width: 40px; height: 40px; }
.chev { width: 16px; height: 10px; color: #777; }

.body { flex: 1; min-height: 0; display: flex; background: #f4f5fa; }
.sidebar { flex: none; display: flex; width: 320px; background: #fff; overflow: hidden; }
.menu { flex: 1; display: flex; flex-direction: column; gap: 11px; padding: 24px 8px 0; }
.item {
  flex: none;
  display: flex;
  align-items: center;
  gap: 8px;
  height: 56px;
  padding: 0 13px 8px 11px;
  border-radius: 8px;
  color: #808080;
}
.item .ico { width: 23px; height: 23px; color: #6b6f85; }
.item .chev { margin-right: auto; margin-top: 7px; }
.item.current { background: #5fae52; color: #fff; }
.item.current svg { color: #fff; }
.submenu { margin: 0 22px 11px 0; }
.submenu a {
  display: block;
  height: 50px;
  padding-right: 7px;
  line-height: 50px;
  border-right: 2px solid #c9d3e8;
  color: #808080;
}
.submenu a.on { border-color: #5fae52; }
.scroll { width: 6px; background: #f0f0f0; }
.thumb { height: 92%; border-radius: 3px; background: #5fae52; }

.content { flex: 1; min-width: 0; padding: 44px 45px 0; box-shadow: inset 0 14px 14px -12px #dcdce4; }
.crumbs { display: flex; align-items: center; gap: 7px; height: 26px; font-size: 15px; font-weight: 700; color: #6b6f85; }
.crumbs svg { width: 10px; height: 16px; }
.heading { display: flex; align-items: flex-start; justify-content: space-between; height: 72px; padding: 7px 0 0 25px; }
.heading h1 { margin: 0; font-size: 26px; line-height: 60px; font-weight: 700; }
.filters { display: flex; gap: 11px; }
.filters button {
  display: flex;
  align-items: center;
  justify-content: center;
  gap: 7px;
  width: 151px;
  height: 54px;
  border-radius: 8px;
  background: #dcdde4;
  color: #555;
}
.filters button + button { width: 188px; }
.filters svg { width: 22px; height: 24px; }

.search { height: 183px; padding: 16px 13px 0; border-radius: 6px; background: #fff; }
.fields { display: grid; grid-template-columns: repeat(3, 1fr); gap: 27px; }
.field label { display: block; height: 37px; line-height: 30px; font-size: 17px; font-weight: 700; color: #909090; }
.field em { color: #f22; font-style: normal; }
.field input { display: block; width: 100%; height: 46px; border: 1px solid #dcdaea; border-radius: 8px; }
.pick { position: relative; }
.pick select {
  display: block;
  width: 100%;
  height: 47px;
  appearance: none;
  border: 1px solid #ced2da;
  border-radius: 8px;
  background: #fff;
}
.pick svg { position: absolute; left: 18px; top: 20px; width: 12px; height: 8px; color: #343a40; }
.submit {
  display: flex;
  align-items: center;
  justify-content: center;
  gap: 7px;
  width: 139px;
  height: 47px;
  margin-top: 18px;
  border-radius: 8px;
  background: #5fae52;
  color: #fff;
  white-space: nowrap;
}
.submit svg { width: 22px; height: 16px; }

.list {
  width: 100%;
  table-layout: fixed;
  border-collapse: collapse;
  background: #fff;
  box-shadow: 0 8px 16px rgba(0, 0, 0, .15);
}
.c1 { width: 339px; }
.c2 { width: 268px; }
.c3 { width: 216px; }
.c4 { width: 232px; }
.c5 { width: 319px; }
.c6 { width: 136px; }
.list th, .list td { padding: 0 8px; text-align: right; white-space: nowrap; }
.list th { height: 49px; background: #f3f3ff; font-size: 17px; font-weight: 700; }
.list td { height: 59px; border-bottom: 1px solid #dee2e6; }
.list tr:last-child td { border-bottom: 0; }
.list th:first-child, .list td:first-child { padding-right: 22px; }
.list .num { font-size: 17px; }
.list label { display: flex; align-items: center; gap: 16px; }
.list input {
  flex: none;
  appearance: none;
  width: 22px;
  height: 22px;
  margin: 0;
  border: 1px solid #777;
  border-radius: 3px;
  background: #fff;
}
.list .control { padding-right: 19px; }
.sortable { display: flex; align-items: center; gap: 8px; }
.sortable svg { width: 16px; height: 16px; }
.small { width: 85px; }

/* Screen sharing notice, floating over the page */
.sharing {
  position: fixed;
  left: 0;
  right: 0;
  bottom: 70px;
  width: 499px;
  height: 55px;
  margin: 0 auto;
  display: flex;
  align-items: center;
  padding: 0 15px 0 12px;
  background: #fff;
  border: 1px solid #c6c8cc;
  box-shadow: 0 2px 4px rgba(0, 0, 0, .25);
  white-space: nowrap;
}
.grip { width: 8px; height: 14px; margin-right: 13px; border: solid #ccc; border-width: 0 3px; }
.msg { flex: 1; }
.sharing button {
  width: 127px;
  height: 40px;
  border-radius: 4px;
  background: #1a73e8;
  color: #fff;
  font-weight: 600;
}
.sharing a { margin-left: 12px; color: #1a73e8; text-decoration: underline; }

/* Taskbar */
.taskbar {
  flex: none;
  display: grid;
  grid-template-columns: 1fr auto 1fr;
  align-items: center;
  height: 60px;
  padding-bottom: 2px;
  border-top: 1px solid #b0b5c4;
  background: linear-gradient(90deg, #e2eef7 0, #e2edf7 18%, #d3e3fb 24%, #d5dbf5 29%, #d3e0fa 41%, #d7daed 50%, #d3dcf5 62%, #d2dff0 68%, #d9d9ea 75%, #e1ecf7 81%, #e1eef9 100%);
}
.weather { display: flex; align-items: center; gap: 8px; padding-left: 24px; line-height: 20px; }
.weather svg { width: 32px; height: 32px; }
.weather small { display: block; font-size: 14px; color: #555; }
.dock { display: flex; align-items: center; padding-left: 7px; }
.start { margin-right: 18px; }
.start svg { width: 29px; height: 29px; }
.find {
  display: flex;
  align-items: center;
  width: 273px;
  height: 39px;
  margin-right: 2px;
  padding-left: 13px;
  border: 1px solid #c4cbe2;
  border-radius: 20px;
  background: #f2f5fd;
}
.find .lens { width: 20px; height: 20px; }
.find input { flex: 1; min-width: 0; margin-left: 12px; padding: 0; border: 0; outline: 0; background: none; font-size: 15px; }
.find input::placeholder { color: #555; }
.find .garden { width: 68px; height: 32px; margin-right: 3px; }
.appico { position: relative; width: 55px; height: 48px; display: grid; place-items: center; }
.appico svg { width: 30px; height: 30px; }
.views { margin-right: 1px; }
.open::after, .focus::after {
  content: "";
  position: absolute;
  bottom: 0;
  left: 24px;
  width: 8px;
  height: 4px;
  border-radius: 2px;
  background: #828795;
}
.focus { width: 48px; margin-left: 3px; border: 1px solid #d5daea; border-radius: 6px; background: #eef2fc; }
.focus::after { left: 13px; width: 20px; background: #0b78d7; }
.focus .mini { position: absolute; right: 2px; top: 3px; width: 20px; height: 20px; }
.tray { display: flex; align-items: center; justify-content: flex-end; padding-right: 25px; }
.tray button { display: flex; align-items: center; justify-content: center; width: 40px; }
.tray svg { width: 20px; height: 20px; }
.tray .up { width: 13px; height: 9px; }
.tray .lang { width: 58px; }
.tray .status { width: 94px; gap: 10px; }
.tray .clock { display: block; width: 84px; line-height: 20px; text-align: right; }
.count {
  width: 20px;
  height: 20px;
  margin-left: 10px;
  line-height: 20px;
  border-radius: 50%;
  background: #0067c0;
  color: #fff;
  font-size: 12px;
  text-align: center;
}
```
